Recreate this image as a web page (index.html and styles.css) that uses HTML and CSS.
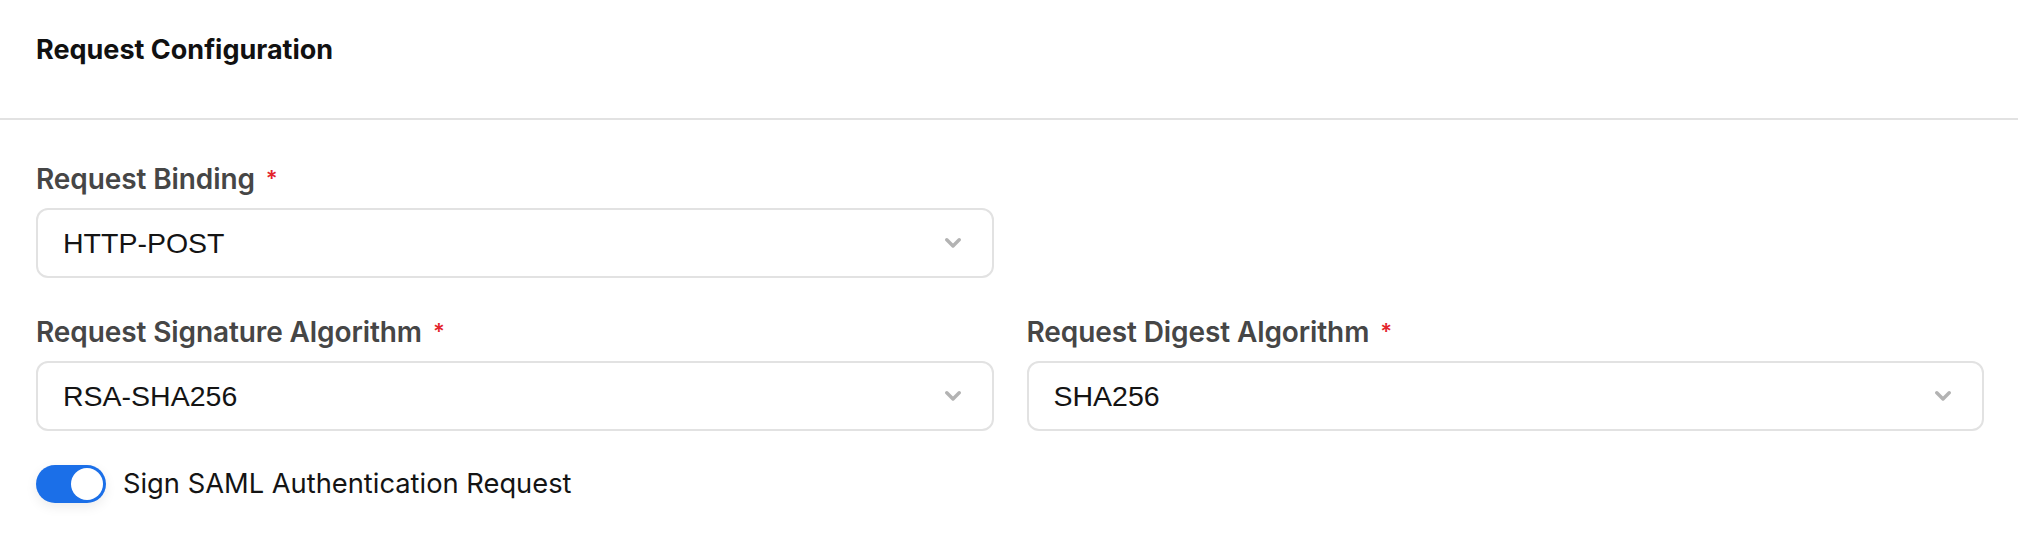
FILE: index.html
```html
<!DOCTYPE html>
<html lang="en">
<head>
<meta charset="utf-8">
<title>Request Configuration</title>
<link rel="stylesheet" href="styles.css">
</head>
<body>
<section class="panel">
  <header class="panel-header">
    <h2 class="panel-title">Request Configuration</h2>
  </header>
  <div class="panel-body">
    <div class="form-grid">
      <div class="field">
        <label class="field-label">Request Binding <span class="req">*</span></label>
        <div class="select">
          <span class="select-value">HTTP-POST</span>
          <svg class="chevron" width="16" height="10" viewBox="0 0 16 10"><path d="M1.8 1.8 L8 8 L14.2 1.8" fill="none" stroke="#b3b3b3" stroke-width="3.4" stroke-linecap="round" stroke-linejoin="round"/></svg>
        </div>
      </div>
      <div class="field-spacer"></div>
      <div class="field">
        <label class="field-label">Request Signature Algorithm <span class="req">*</span></label>
        <div class="select">
          <span class="select-value">RSA-SHA256</span>
          <svg class="chevron" width="16" height="10" viewBox="0 0 16 10"><path d="M1.8 1.8 L8 8 L14.2 1.8" fill="none" stroke="#b3b3b3" stroke-width="3.4" stroke-linecap="round" stroke-linejoin="round"/></svg>
        </div>
      </div>
      <div class="field">
        <label class="field-label">Request Digest Algorithm <span class="req">*</span></label>
        <div class="select">
          <span class="select-value">SHA256</span>
          <svg class="chevron" width="16" height="10" viewBox="0 0 16 10"><path d="M1.8 1.8 L8 8 L14.2 1.8" fill="none" stroke="#b3b3b3" stroke-width="3.4" stroke-linecap="round" stroke-linejoin="round"/></svg>
        </div>
      </div>
    </div>
    <div class="toggle-row">
      <span class="toggle"><span class="knob"></span></span>
      <span class="toggle-label">Sign SAML Authentication Request</span>
    </div>
  </div>
</section>
</body>
</html>
```

FILE: styles.css
```css
* { box-sizing: border-box; }

html, body {
  margin: 0;
  padding: 0;
  background: #ffffff;
}

body {
  font-family: Inter, "Noto Sans", "Liberation Sans", sans-serif;
  color: #111111;
}

.panel {
  width: 2018px;
  height: 538px;
  overflow: hidden;
}

.panel-header {
  padding: 34px 36px 52px;
  border-bottom: 2px solid #e2e2e2;
}

.panel-title {
  margin: 0;
  font-size: 27px;
  line-height: 32px;
  font-weight: 700;
  color: #111111;
}

.panel-body {
  padding: 42px 34px 0 36px;
}

.form-grid {
  display: grid;
  grid-template-columns: 1fr 1fr;
  column-gap: 33px;
  row-gap: 37px;
}

.field {
  display: flex;
  flex-direction: column;
  gap: 13px;
}

.field-label {
  font-size: 28px;
  line-height: 32px;
  font-weight: 600;
  color: #464646;
  letter-spacing: -0.1px;
}

.req {
  color: #e3242b;
  font-size: 22px;
  vertical-align: 3px;
  margin-left: 4px;
}

.select {
  height: 70px;
  border: 2px solid #e2e2e2;
  border-radius: 12px;
  display: flex;
  align-items: center;
  justify-content: space-between;
  padding: 0 31px 0 25px;
  background: #fff;
}

.select-value {
  font-family: "Liberation Sans", Arial, sans-serif;
  font-size: 28.5px;
  color: #141414;
}

.chevron {
  display: block;
}

.toggle-row {
  display: flex;
  align-items: center;
  gap: 17px;
  margin-top: 34px;
}

.toggle {
  width: 70px;
  height: 38px;
  border-radius: 19px;
  background: #1b6fe8;
  display: flex;
  align-items: center;
  justify-content: flex-end;
  padding: 0 3px;
  box-shadow: 0 4px 12px rgba(0, 0, 0, 0.08);
}

.knob {
  width: 32px;
  height: 32px;
  border-radius: 50%;
  background: #ffffff;
}

.toggle-label {
  font-size: 27.3px;
  line-height: 32px;
  font-weight: 400;
  color: #141414;
}
```
